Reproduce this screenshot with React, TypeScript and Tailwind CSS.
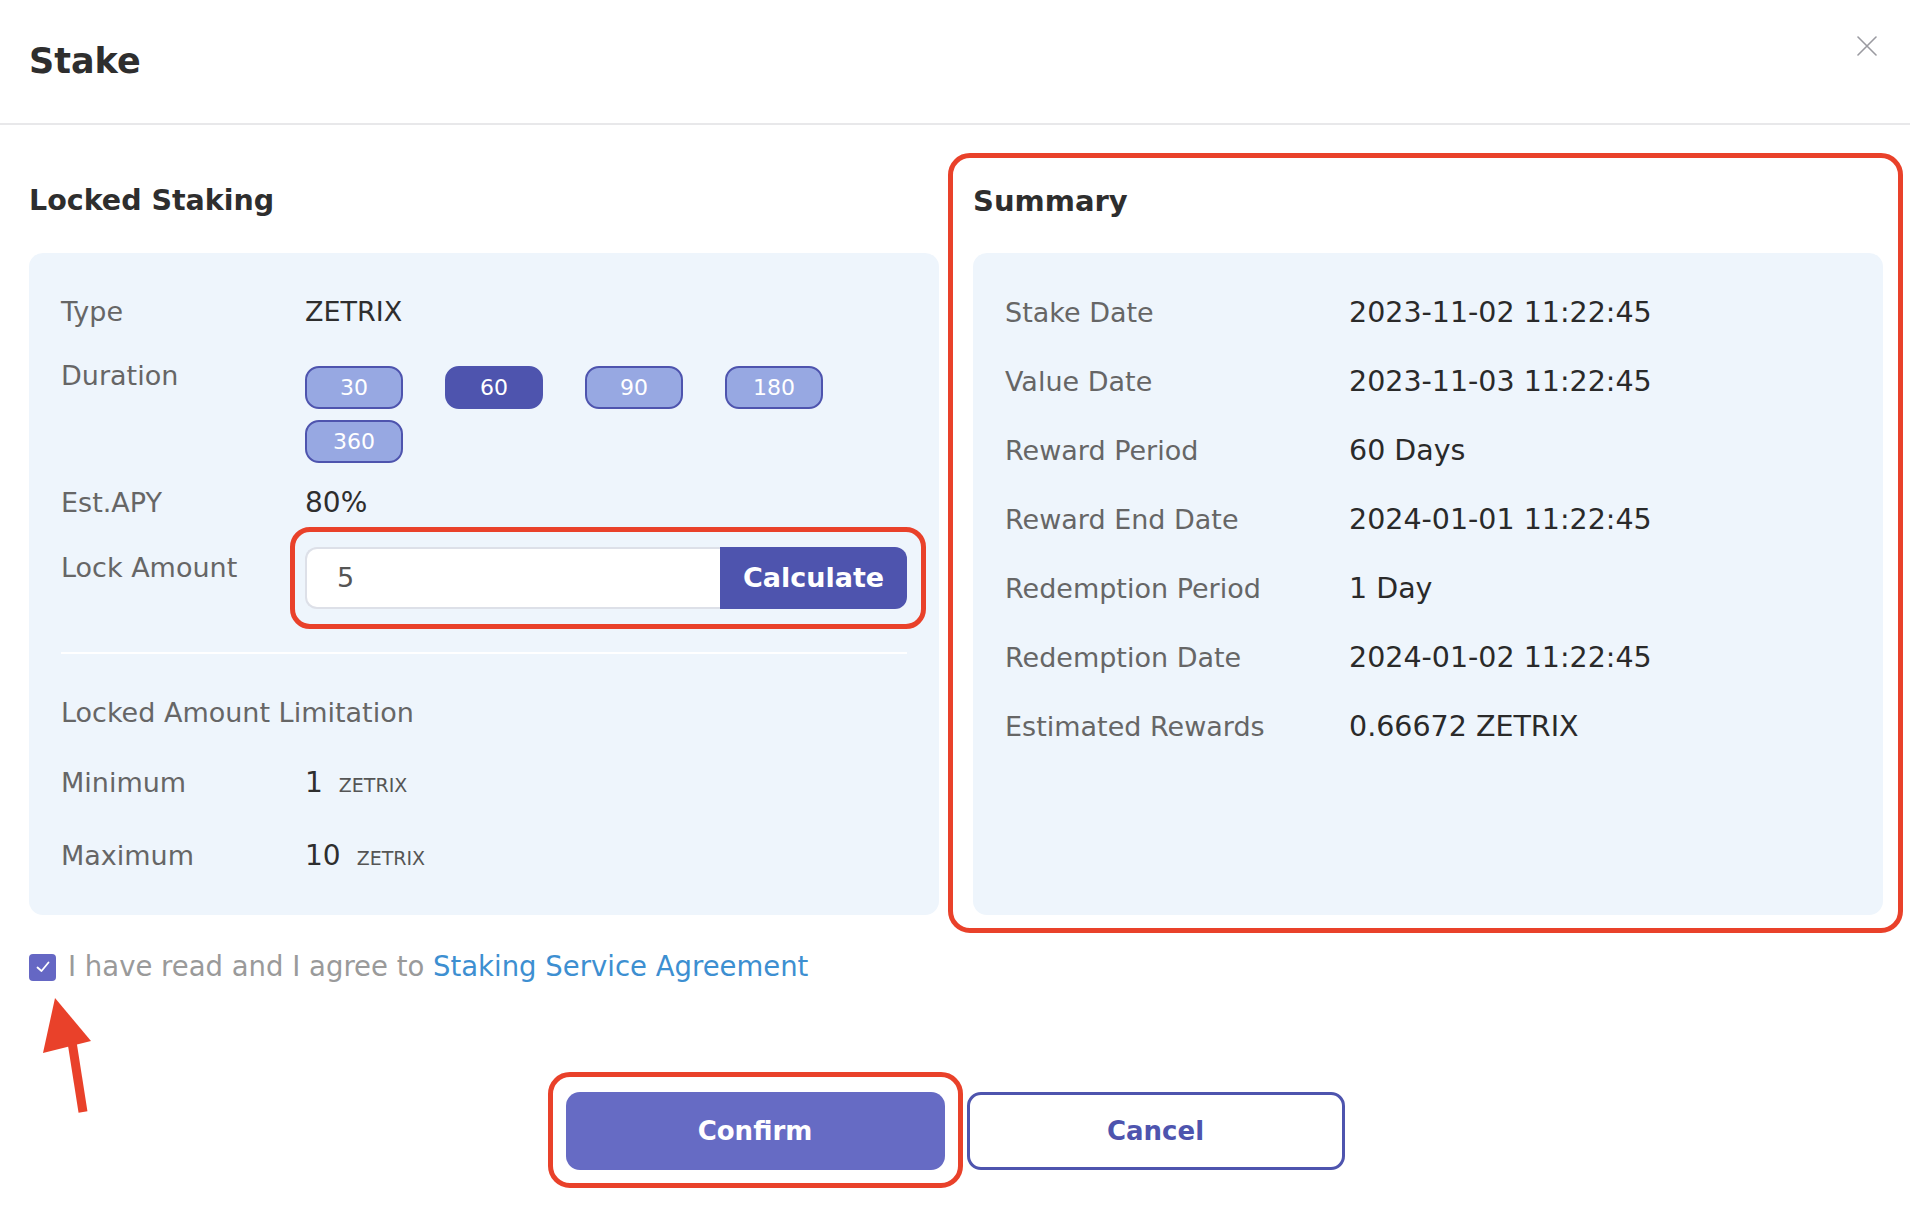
import React from "react";

const durations = [30, 60, 90, 180, 360];

const summary: [string, string][] = [
  ["Stake Date", "2023-11-02 11:22:45"],
  ["Value Date", "2023-11-03 11:22:45"],
  ["Reward Period", "60 Days"],
  ["Reward End Date", "2024-01-01 11:22:45"],
  ["Redemption Period", "1 Day"],
  ["Redemption Date", "2024-01-02 11:22:45"],
  ["Estimated Rewards", "0.66672 ZETRIX"],
];

function CloseIcon() {
  return (
    <svg width="20" height="20" viewBox="0 0 20 20" fill="none" stroke="#9a9aa0" strokeWidth="1.6" strokeLinecap="round">
      <path d="M1 1L19 19M19 1L1 19" />
    </svg>
  );
}

function RedArrow() {
  return (
    <svg className="absolute left-[30px] top-[990px]" width="80" height="130" viewBox="0 0 80 130">
      <polygon points="25,8 13,63 61,51" fill="#e9412a" />
      <line x1="42" y1="52" x2="53" y2="122" stroke="#e9412a" strokeWidth="9" />
    </svg>
  );
}

export default function App() {
  const selected = 60;

  return (
    <div className="relative w-[1910px] h-[1216px] bg-white font-['DejaVu_Sans','Open_Sans',sans-serif] text-[#333]">
      {/* header */}
      <div className="h-[125px] border-b-2 border-[#e8e8ea] flex justify-between pl-[29px] pr-[33px]">
        <h1 className="mt-[38px] text-[35px] leading-[46px] font-bold text-[#2e2e2e]">Stake</h1>
        <button className="mt-[36px] self-start">
          <CloseIcon />
        </button>
      </div>

      <div className="grid grid-cols-2 gap-[34px] pl-[29px] pr-[27px]">
        {/* left column */}
        <div className="flex flex-col">
          <h2 className="mt-[56px] mb-[32px] text-[28.5px] leading-[40px] font-bold text-[#2e2e2e]">Locked Staking</h2>
          <div className="flex-1 bg-[#eef5fc] rounded-[14px] px-[32px] pt-[39px] pb-[37px] text-[27px]">
            <div className="flex leading-[40px]">
              <div className="w-[244px] text-[#666]">Type</div>
              <div className="text-[27px] text-[#2e2e2e]">ZETRIX</div>
            </div>

            <div className="flex mt-[24px]">
              <div className="w-[244px] leading-[40px] text-[#666]">Duration</div>
              <div className="flex-1 flex flex-wrap gap-x-[42px] gap-y-[11px] mt-[10px]">
                {durations.map((d) => (
                  <button
                    key={d}
                    className={
                      d === selected
                        ? "w-[98px] h-[43px] rounded-[14px] border-2 border-[#4e54ae] bg-[#4e54ae] text-white text-[22px] leading-[36px]"
                        : "w-[98px] h-[43px] rounded-[14px] border-2 border-[#4e54ae] bg-[#97a8e2] text-white text-[22px] leading-[40px]"
                    }
                  >
                    {d}
                  </button>
                ))}
              </div>
            </div>

            <div className="flex mt-[20px] leading-[40px]">
              <div className="w-[244px] text-[#666]">Est.APY</div>
              <div className="text-[28px] text-[#2e2e2e]">80%</div>
            </div>

            <div className="flex mt-[24px]">
              <div className="w-[244px] leading-[40px] text-[#666] mt-[1px]">Lock Amount</div>
              <div className="relative flex-1 flex h-[62px]">
                <div className="absolute -left-[15px] -right-[19px] -top-[20px] -bottom-[20px] border-[5px] border-[#e9412a] rounded-[20px]" />
                <div className="flex-1 flex items-center bg-white border-2 border-[#dde0e8] border-r-0 rounded-l-[12px] pl-[30px] text-[27px] text-[#555]">
                  5
                </div>
                <button className="w-[187px] bg-[#4e54ae] rounded-r-[12px] text-white text-[27px] font-bold">Calculate</button>
              </div>
            </div>

            <div className="h-[2px] bg-white mt-[43px]" />

            <div className="mt-[39px] leading-[40px] text-[#666]">Locked Amount Limitation</div>

            <div className="flex items-baseline mt-[30px] leading-[40px]">
              <div className="w-[244px] text-[#666]">Minimum</div>
              <div className="text-[28px] text-[#2e2e2e]">1</div>
              <div className="ml-[16px] text-[19px] text-[#555]">ZETRIX</div>
            </div>

            <div className="flex items-baseline mt-[31px] leading-[40px]">
              <div className="w-[244px] text-[#666]">Maximum</div>
              <div className="text-[28px] text-[#2e2e2e]">10</div>
              <div className="ml-[16px] text-[19px] text-[#555]">ZETRIX</div>
            </div>
          </div>
        </div>

        {/* right column */}
        <div className="relative flex flex-col">
          <div className="absolute -left-[25px] -right-[20px] top-[28px] -bottom-[18px] border-[5px] border-[#e9412a] rounded-[22px]" />
          <h2 className="mt-[56px] mb-[32px] text-[29px] leading-[40px] font-bold text-[#2e2e2e]">Summary</h2>
          <div className="flex-1 bg-[#eef5fc] rounded-[14px] px-[32px] pt-[40px] flex flex-col gap-[29px]">
            {summary.map(([k, v]) => (
              <div key={k} className="flex leading-[40px]">
                <div className="w-[344px] text-[27px] text-[#666]">{k}</div>
                <div className="text-[28.5px] text-[#2a2a2a]">{v}</div>
              </div>
            ))}
          </div>
        </div>
      </div>

      {/* agreement */}
      <div className="flex items-center gap-[12px] pl-[29px] mt-[38px] h-[28px]">
        <div className="w-[27px] h-[27px] rounded-[4px] bg-[#6567c4] flex items-center justify-center">
          <svg width="16" height="16" viewBox="0 0 16 16" fill="none" stroke="white" strokeWidth="1.8" strokeLinecap="round" strokeLinejoin="round">
            <path d="M2.5 8.5L6.5 12L13.5 3.5" />
          </svg>
        </div>
        <div className="text-[27.5px] text-[#9a9a9a]">
          I have read and I agree to <span className="text-[#3d8fd1]">Staking Service Agreement</span>
        </div>
      </div>

      {/* actions */}
      <div className="flex justify-center gap-[22px] mt-[111px]">
        <div className="relative">
          <div className="absolute -left-[18px] -right-[18px] -top-[20px] -bottom-[18px] border-[5px] border-[#e9412a] rounded-[22px]" />
          <button className="w-[379px] h-[78px] rounded-[14px] bg-[#666bc4] text-white text-[26px] font-bold">Confirm</button>
        </div>
        <button className="w-[378px] h-[78px] rounded-[14px] border-[3px] border-[#4e54ae] bg-white text-[#4e54ae] text-[26px] font-bold">Cancel</button>
      </div>

      <RedArrow />
    </div>
  );
}
